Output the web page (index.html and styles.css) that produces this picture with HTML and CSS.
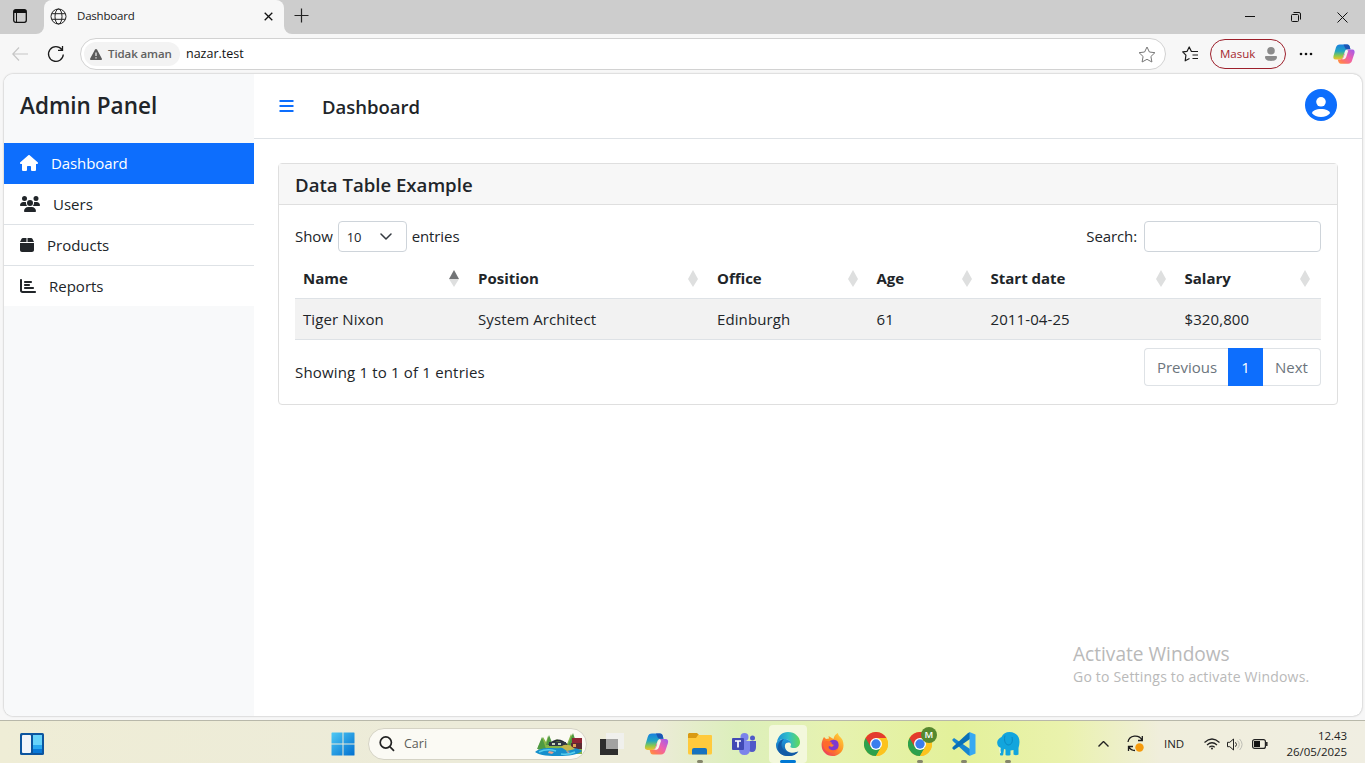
FILE: index.html
```html
<!DOCTYPE html>
<html lang="id">
<head>
<meta charset="utf-8">
<title>Dashboard</title>
<link rel="stylesheet" href="styles.css">
</head>
<body>
<svg class="defs" width="0" height="0" aria-hidden="true">
  <defs>
    <linearGradient id="cpA" x1="0" y1="0" x2="0" y2="1"><stop offset="0" stop-color="#1a7fe0"/><stop offset=".45" stop-color="#22a6c0"/><stop offset=".75" stop-color="#8fc94a"/><stop offset="1" stop-color="#f4c02c"/></linearGradient>
    <linearGradient id="cpB" x1="1" y1="0" x2="0" y2="1"><stop offset="0" stop-color="#9a5cf0"/><stop offset=".45" stop-color="#ee5fae"/><stop offset=".8" stop-color="#ff7a58"/><stop offset="1" stop-color="#ffa03c"/></linearGradient>
    <linearGradient id="win" x1="0" y1="0" x2="1" y2="1"><stop offset="0" stop-color="#4fc9f4"/><stop offset="1" stop-color="#006fd0"/></linearGradient>
    <linearGradient id="edgeTop" x1="0" y1="0" x2="1" y2="0"><stop offset="0" stop-color="#1b8fd6"/><stop offset=".5" stop-color="#30bfc9"/><stop offset="1" stop-color="#62d957"/></linearGradient>
    <linearGradient id="edgeLow" x1="0" y1="0" x2="0" y2="1"><stop offset="0" stop-color="#1f9de0"/><stop offset="1" stop-color="#0f4d9c"/></linearGradient>
    <linearGradient id="fox" x1="1" y1="0" x2="0" y2="1"><stop offset="0" stop-color="#ffe040"/><stop offset=".5" stop-color="#ff8a24"/><stop offset="1" stop-color="#e8246c"/></linearGradient>
    <symbol id="copilot" viewBox="0 0 24 24">
      <path fill="url(#cpA)" d="M7.500 1.500h8c1.500 0 2.300.8 2.700 2.200l.8 3h-2.500c-2 0-3 .8-3.600 2.600l-1.800 5.700c-.6 2-1.600 3-3.600 3H3C.5 18 0 16 .600 13.800L3.200 4.900C3.900 2.600 5.200 1.500 7.500 1.500z"/>
      <path fill="#1c55b4" d="M11.500 1.500h4c1.500 0 2.300.8 2.700 2.200l.8 3h-3.200c-1.700 0-2.600-.6-3-2.200z"/>
      <path fill="url(#cpB)" d="M16.500 22.500h-8c-1.500 0-2.300-.8-2.700-2.200L5.200 18h2.300c2 0 3-1 3.600-3l1.200-3.800 1.500 3.200 2.200-7.400H21c2.500 0 3 2 2.400 4.200l-2.600 7.900c-.7 2.300-2 3.400-4.300 3.400z"/>
      <path fill="#f6f5ec" d="M14.300 8.300h2.400l-2.400 7.200q-.6 1.800-2.300 2.200H9.500q1.500-.6 2-2.200z"/>
    </symbol>
    <symbol id="chrome" viewBox="0 0 24 24">
      <circle cx="12" cy="12" r="12" fill="#fcc31e"/>
      <path fill="#2da14c" d="M1.600 6A12 12 0 0 0 12 24l5.200-9z"/>
      <path fill="#e33b2e" d="M12 6h10.400A12 12 0 0 0 1.600 6l5.200 9z"/>
      <path fill="#fcc31e" d="M12 6h10.400A12 12 0 0 1 12 24l5.200-9z"/>
      <circle cx="12" cy="12" r="6" fill="#fff"/><circle cx="12" cy="12" r="4.700" fill="#3b7ded"/>
    </symbol>
  </defs>
</svg>

<div class="browser">
  <header class="tabstrip">
    <div class="tab-actions"><svg width="14" height="14" viewBox="0 0 14 14"><rect x=".7" y=".7" width="12.600" height="12.600" rx="2" fill="none" stroke="#111" stroke-width="1.300"/><path d="M1 1h12v3H1z" fill="#111"/><path d="M3.500 4v9" stroke="#111"/></svg></div>
    <div class="tab">
      <svg class="globe" width="17" height="17" viewBox="0 0 17 17" fill="none" stroke="#222"><circle cx="8.500" cy="8.500" r="7.500"/><ellipse cx="8.500" cy="8.500" rx="3.500" ry="7.500"/><path d="M1.700 5.700h13.600M1.700 11.300h13.600"/></svg>
      <span class="tab-title">Dashboard</span>
      <svg width="9" height="9" viewBox="0 0 9 9" stroke="#111" stroke-width="1.300"><path d="m.7.700 7.600 7.600M8.300.700.700 8.300"/></svg>
    </div>
    <svg class="new-tab" width="15" height="15" viewBox="0 0 15 15" stroke="#222" stroke-width="1.200"><path d="M7.500.500v14M.500 7.500h14"/></svg>
    <div class="window-buttons">
      <svg width="10" height="10" viewBox="0 0 10 10" stroke="#111"><path d="M0 4.500h10"/></svg>
      <svg width="10" height="10" viewBox="0 0 10 10" fill="none" stroke="#111"><rect x=".5" y="2.500" width="7" height="7" rx="1"/><path d="M2.500.500h5.500a1.500 1.500 0 0 1 1.500 1.500v5.500"/></svg>
      <svg width="11" height="11" viewBox="0 0 11 11" stroke="#111"><path d="m.500.500 10 10M10.500.500l-10 10"/></svg>
    </div>
  </header>

  <div class="toolbar">
    <svg class="back" width="16" height="14" viewBox="0 0 16 14" fill="none" stroke="#c6c6c6" stroke-width="1.200"><path d="M7 .500.800 7 7 13.500M1 7h15"/></svg>
    <svg class="reload" width="18" height="18" viewBox="0 0 18 18" fill="none" stroke="#1b1b1b" stroke-width="1.300"><path d="M16.300 9.500A7.400 7.400 0 1 1 14.800 4.500M15.500 1v4.400H11"/></svg>
    <div class="address">
      <span class="security"><svg width="12" height="11" viewBox="0 0 12 11"><path d="M6 0c.5 0 .8.200 1 .600l4.800 8.800c.4.800 0 1.600-.9 1.600H1.100C.200 11-.200 10.200.200 9.400L5 .600C5.200.200 5.500 0 6 0z" fill="#5b5b5b"/><path d="M6 3.500v3.500M6 8.200v1.300" stroke="#f3f3f3" stroke-width="1.200"/></svg><span>Tidak aman</span></span>
      <span class="url">nazar.test</span>
      <svg class="star" width="18" height="17" viewBox="0 0 18 17" fill="none" stroke="#777" stroke-linejoin="round"><path d="m9 1 2.400 5 5.500.700-4 3.800 1 5.500L9 13.300 4.100 16l1-5.500-4-3.800L6.600 6z"/></svg>
    </div>
    <svg class="favorites" width="17" height="16" viewBox="0 0 17 16" fill="none" stroke="#1b1b1b" stroke-width="1.200" stroke-linejoin="round"><path d="M10.500 5.500 9.300 5.300 7.200 1 5.100 5.300.700 5.900l3.200 3.300-.7 5.600L7.500 12.500M9.800 5.500H16M10.500 9H16M10.500 12.500H16"/></svg>
    <div class="signin"><span>Masuk</span><svg width="12" height="14" viewBox="0 0 12 14" fill="#8b8b8b"><circle cx="6" cy="3.800" r="3.800"/><path d="M1.200 9h9.600c.7 0 1.200.500 1.200 1.100C12 12.800 9.500 14 6 14s-6-1.200-6-3.900C0 9.500.500 9 1.200 9z"/></svg></div>
    <svg class="more" width="14" height="4" viewBox="0 0 14 4" fill="#111"><circle cx="2" cy="2" r="1.300"/><circle cx="7" cy="2" r="1.300"/><circle cx="12" cy="2" r="1.300"/></svg>
    <svg class="copilot" width="22" height="22"><use href="#copilot"/></svg>
  </div>

  <div class="viewport">
    <aside class="sidebar">
      <h4 class="brand">Admin Panel</h4>
      <nav class="menu">
        <a class="menu-item active"><svg width="18" height="16" viewBox="0 0 576 512"><path d="M575.800 255.500c0 18-15 32.100-32 32.100h-32l.7 160.200c0 2.700-.2 5.400-.5 8.100V472c0 22.100-17.900 40-40 40H392c-22.100 0-40-17.900-40-40V384c0-17.700-14.300-32-32-32H256c-17.700 0-32 14.300-32 32v88c0 22.100-17.900 40-40 40H104c-22.100 0-40-17.900-40-40V287.600H32c-18 0-32-14-32-32.100c0-9 3-17 10-24L266.400 8c7-7 15-8 22-8s15 2 21 7L564.800 231.500c8 7 12 15 11 24z"/></svg><span>Dashboard</span></a>
        <a class="menu-item"><svg width="20" height="16" viewBox="0 0 640 512"><path d="M144 0a80 80 0 1 1 0 160A80 80 0 1 1 144 0zM512 0a80 80 0 1 1 0 160A80 80 0 1 1 512 0zM0 298.700C0 239.800 47.800 192 106.700 192h42.700c15.900 0 31 3.500 44.600 9.700c-1.300 7.200-1.900 14.700-1.900 22.300c0 38.200 16.800 72.500 43.300 96H21.300C9.600 320 0 310.400 0 298.700zM405.300 320c26-23.500 42.600-57.800 42.600-96c0-7.600-.7-15-1.900-22.300c13.600-6.300 28.700-9.700 44.600-9.700h42.700C592.200 192 640 239.800 640 298.700c0 11.800-9.600 21.300-21.300 21.300H405.300zM224 224a96 96 0 1 1 192 0 96 96 0 1 1 -192 0zM128 485.300C128 411.700 187.700 352 261.300 352H378.700C452.300 352 512 411.700 512 485.300c0 14.700-11.900 26.700-26.700 26.700H154.700c-14.700 0-26.700-11.900-26.700-26.700z"/></svg><span>Users</span></a>
        <a class="menu-item"><svg width="14" height="16" viewBox="0 0 448 512"><path d="M50.700 58.500L0 160H208V32H93.700C75.500 32 58.900 42.300 50.700 58.500zM240 160H448L397.300 58.500C389.100 42.300 372.500 32 354.300 32H240V160zm208 32H0V416c0 35.300 28.700 64 64 64H384c35.300 0 64-28.700 64-64V192z"/></svg><span>Products</span></a>
        <a class="menu-item"><svg width="16" height="16" viewBox="0 0 512 512"><path d="M32 32c17.700 0 32 14.300 32 32V400c0 8.800 7.200 16 16 16H480c17.700 0 32 14.300 32 32s-14.300 32-32 32H80c-44.200 0-80-35.800-80-80V64C0 46.300 14.300 32 32 32zm96 96c0-17.700 14.300-32 32-32l192 0c17.700 0 32 14.300 32 32s-14.300 32-32 32l-192 0c-17.700 0-32-14.300-32-32zm32 64H288c17.700 0 32 14.300 32 32s-14.300 32-32 32H160c-17.700 0-32-14.300-32-32s14.300-32 32-32zm0 96H416c17.700 0 32 14.300 32 32s-14.300 32-32 32H160c-17.700 0-32-14.300-32-32s14.300-32 32-32z"/></svg><span>Reports</span></a>
      </nav>
    </aside>
    <main class="page">
      <div class="topbar">
        <svg class="bars" width="15" height="12" viewBox="0 0 15 12" stroke="#0d6efd" stroke-width="2"><path d="M.500 1h14M.500 6h14M.500 11h14"/></svg>
        <h5 class="page-title">Dashboard</h5>
        <svg class="avatar" width="32" height="32" viewBox="0 0 32 32"><circle cx="16" cy="16" r="16" fill="#0d6efd"/><circle cx="16" cy="12.800" r="4.800" fill="#fff"/><path d="M16 20c5 0 9 2 9 4.200-1.800 2-5 3.800-9 3.800s-7.200-1.800-9-3.800C7 22 11 20 16 20z" fill="#fff"/></svg>
      </div>
      <section class="card">
        <h5 class="card-header">Data Table Example</h5>
        <div class="card-body">
          <div class="controls">
            <label class="length"><span>Show</span><span class="select">10<svg width="12" height="7" viewBox="0 0 12 7" fill="none" stroke="#343a40" stroke-width="1.500" stroke-linecap="round" stroke-linejoin="round"><path d="m1 1 5 5 5-5"/></svg></span><span>entries</span></label>
            <label class="search"><span>Search:</span><input type="text"></label>
          </div>
          <table class="data">
            <colgroup><col class="c1"><col class="c2"><col class="c3"><col class="c4"><col class="c5"><col class="c6"></colgroup>
            <thead><tr>
              <th><div class="th asc">Name<i></i></div></th><th><div class="th">Position<i></i></div></th><th><div class="th">Office<i></i></div></th><th><div class="th">Age<i></i></div></th><th><div class="th">Start date<i></i></div></th><th><div class="th">Salary<i></i></div></th>
            </tr></thead>
            <tbody><tr><td>Tiger Nixon</td><td>System Architect</td><td>Edinburgh</td><td>61</td><td>2011-04-25</td><td>$320,800</td></tr></tbody>
          </table>
          <div class="table-footer">
            <span class="info">Showing 1 to 1 of 1 entries</span>
            <div class="pagination"><span class="prev">Previous</span><span class="current">1</span><span class="next">Next</span></div>
          </div>
        </div>
      </section>
    </main>
  </div>
</div>

<div class="watermark"><div class="wm-title">Activate Windows</div><div class="wm-text">Go to Settings to activate Windows.</div></div>

<footer class="taskbar">
  <svg class="widgets" width="24" height="22" viewBox="0 0 24 22"><rect width="24" height="22" rx="1.500" fill="#0c559f"/><rect x="2" y="2" width="9" height="18" rx="1" fill="#f2f5fa"/><path d="M13 2h9v10h-9z" fill="#67d3fa"/><path d="M13 12h9v4h-9z" fill="#28a8f0"/><path d="M13 16h9v4h-9z" fill="#0878d8"/></svg>
  <svg class="start" width="24" height="24" viewBox="0 0 24 24" fill="url(#win)"><path d="M1 .500H11.500v11H.500V1zM12.500.500H23a.5.500 0 0 1 .500.500v10.500h-11zM.500 12.500h11v11H1a.5.500 0 0 1-.5-.5zM12.500 12.500h11V23a.5.500 0 0 1-.5.500H12.500z"/></svg>
  <div class="task-search">
    <svg width="16" height="16" viewBox="0 0 16 16" fill="none" stroke="#222" stroke-width="1.700"><circle cx="6.800" cy="6.500" r="5.600"/><path d="m10.800 10.700 4.200 4.200"/></svg>
    <span>Cari</span>
    <svg class="scene" width="48" height="25" viewBox="0 0 48 25"><path d="M3 15 8 5l3 5 2-6 4 8 5-5 4 4 6 1 4-10 4 8 4-1 3 4v9H4z" fill="#86b548"/><path d="m2 17 5-12 4 12zM11 13l3-10 4 10zM33 13l5-12 4 12z" fill="#4f9a41"/><path d="M14 13q9-9 18 0" fill="none" stroke="#252a35" stroke-width="2"/><path d="M14 10h17v4H14z" fill="#303744"/><path d="M17 11h3v2h-3zM23 11h3v2h-3z" fill="#c7d7bd"/><path d="M37 6h10v5H37z" fill="#8e2434"/><path d="M36 11h11v6H36z" fill="#5d2b34"/><path d="M38 12h3v3h-3z" fill="#e3a352"/><path d="M0 20c8-6 18-3 25-4 9-1 20 0 22 3-4 4-14 5-23 5S5 24 0 20z" fill="#168fcc"/><path d="M4 20q8-4 17-1M26 22q9 1 14-2" fill="none" stroke="#57cdec" stroke-width="1.500"/><path d="M26 15q3-4 10-1l4 3-8 2z" fill="#c4b74c"/><path d="m14 19 5 1-2 2-4-1zM31 19l4 1-2 1z" fill="#e9a18c"/></svg>
  </div>
  <div class="apps">
    <div class="app"><svg width="24" height="22" viewBox="0 0 24 22"><path d="M0 6h18v16H0z" fill="#2d2d2d"/><path d="M6 0h18v16H6z" fill="#f0f0ee" fill-opacity=".94"/><path d="M6 6h12v10H6z" fill="#a2a2a1"/></svg></div>
    <div class="app"><svg width="25" height="24"><use href="#copilot"/></svg></div>
    <div class="app running"><svg width="24" height="22" viewBox="0 0 24 22"><path d="M1 0h8l2 2v4H0V1z" fill="#d99a13"/><path d="M10 2h13a1 1 0 0 1 1 1v17a1.500 1.500 0 0 1-1.500 1.500h-21A1.500 1.500 0 0 1 0 20V5h8z" fill="#ffca3d"/><path d="M4 21.500V17q0-2 2-2h11q2 0 2 2v4.500z" fill="#1773bf"/></svg></div>
    <div class="app"><svg width="25" height="22" viewBox="0 0 25 22"><circle cx="12.500" cy="4" r="4" fill="#7b83eb"/><circle cx="20.500" cy="5" r="2.500" fill="#5059c9"/><path d="M16 8h8v6q0 5-4 5-4 0-4-4z" fill="#5059c9"/><path d="M7 8h11v8q0 6-5.500 6T7 16z" fill="#7b83eb"/><rect y="5" width="12" height="12" rx="1" fill="#4149b5"/><path d="M3 8h6M6 8v6.500" stroke="#fff" stroke-width="1.700"/></svg></div>
    <div class="app selected"><svg width="24" height="24" viewBox="0 0 24 24"><path d="M1 10C2 4 6 0 12 0c7 0 12 5 12 10 0 4-3 6-6 6-4 0-4-1-3-3 0-4-3-6-7-6-3 0-5 1-7 3z" fill="url(#edgeTop)"/><path d="M0 13C0 9 4 7 8 7c4 0 7 2 7 5-1-2-5-2-6 1-1 5 4 8 8 8 2 0 4-.6 5.500-1.500C20 22.500 17 24 12 24 5 24 0 19 0 13z" fill="url(#edgeLow)"/><path d="M8 7c-3 3-4 8 1 12 4 3 9 2 13 .500C20 22.500 17 24 12 24 5 24 2 20 2 15c0-4 2-7 6-8z" fill="#125ba6"/></svg></div>
    <div class="app"><svg width="23" height="23" viewBox="0 0 23 23"><path d="M3 4 5 6l3-.5L7.500 3l5 3C13 3 14.500 1 17 0c0 3 3 4 4.500 7C25 16 19 23 11.500 23 3 23-3 14 3 4z" fill="url(#fox)"/><path d="M8 10c1-4 7-4 9-1 2 5-1 9-5 9-5 0-6-4-4-5l3 1 2-2z" fill="#7d38cf"/><path d="M2 10c3-3 7-2 9 0-1 2-3.500 2-3.500 4 0 3 6 5 9.500 1-2 7-15 6-15-5z" fill="#ff6a2c"/></svg></div>
    <div class="app"><svg width="24" height="24"><use href="#chrome"/></svg></div>
    <div class="app running"><svg width="24" height="24"><use href="#chrome"/></svg><span class="badge">M</span></div>
    <div class="app running"><svg width="24" height="24" viewBox="0 0 24 24"><path d="M2 6 .500 7.400v1.300L16 23l2 .700V17z" fill="#1686d0"/><path d="M2 18 .500 16.600v-1.300L16 1l2-.700V7z" fill="#0870b7"/><path d="m17.500 0 6 2.500v19l-6 2.500z" fill="#36a9f2"/></svg></div>
    <div class="app running"><svg width="23" height="24" viewBox="0 0 23 24"><path d="M4.500 5C6 1.500 9 0 12.500 0 18.500 0 22.500 4 22.500 10c0 2-.5 4-1 6v6.500q-2.500 1.500-5 0V18l-3 .5V23q-2.500 1.200-5 0v-5.500L7 17l-.8 6q-1.700 1-3.200 0l.5-7C1 15 0 12.500.200 10 .500 8 2 6 4.500 5z" fill="#12a5dd"/><path d="M8 3.500c-1 4-.5 8.500 3 9.500 4 0 5-4 4-8" fill="none" stroke="#0b88c2"/><path d="M3 15.500q-.8 3 .5 5.500" fill="none" stroke="#e9f7e0" stroke-width="1.200"/></svg></div>
  </div>
  <div class="tray">
    <svg class="chevron" width="11" height="6" viewBox="0 0 11 6" fill="none" stroke="#222" stroke-width="1.400"><path d="m.500 5.500 5-5 5 5"/></svg>
    <svg class="update" width="18" height="18" viewBox="0 0 18 18" fill="none" stroke="#1d1d1d" stroke-width="1.300"><path d="M1 7c1-7 11-8 14-2M15.300 1v4.500H11M8 15.500C5 15.500 3 14 2 12M1.500 16v-4.500H6"/><circle cx="12.500" cy="12.500" r="4.200" fill="#f59a0b" stroke="none"/></svg>
    <span class="lang">IND</span>
    <svg class="wifi" width="16" height="12" viewBox="0 0 16 12" fill="none" stroke="#222" stroke-width="1.200"><path d="M.500 4.500Q8-2.500 15.500 4.500M3 7q5-4.500 10 0M5.300 9.300Q8 7 10.700 9.300"/><circle cx="8" cy="10.600" r="1" fill="#222" stroke="none"/></svg>
    <svg class="sound" width="16" height="13" viewBox="0 0 16 13" fill="none" stroke="#222"><path d="M.500 4.300h2.300L6.500 1v11L2.800 8.700H.500zM8.500 4.300q2 2.200 0 4.400"/><path d="M10.500 2.600q3.500 3.900 0 7.800M12.600 1q5 5.500 0 11" stroke="#bdbdb5"/></svg>
    <svg class="battery" width="16" height="10" viewBox="0 0 16 10"><rect x=".6" y=".6" width="12.800" height="8.800" rx="2" fill="none" stroke="#222" stroke-width="1.200"/><path d="M2 2h6v6H2z" fill="#111"/><path d="M14.800 3v4" stroke="#222" stroke-width="1.500"/></svg>
    <div class="clock"><div class="time">12.43</div><div class="date">26/05/2025</div></div>
  </div>
</footer>
</body>
</html>
```
FILE: styles.css
```css
* { box-sizing: border-box; }
html, body { height: 100%; overflow: hidden; }
body { margin: 0; display: flex; flex-direction: column; color: #212529; background: #f7f7f7; font-family: "Open Sans", "Noto Sans", sans-serif; font-size: 15px; line-height: 24px; white-space: nowrap; }
h4, h5 { margin: 0; font-weight: 600; }
svg { display: block; flex: none; }
.defs { position: absolute; }

.browser { height: 720px; flex: none; display: flex; flex-direction: column; }
.tabstrip { height: 34px; display: flex; align-items: center; background: linear-gradient(90deg, #cdcdcd 0 36px, #f7f7f7 36px 292px, #cdcdcd 292px); }
.tab-actions { width: 44px; height: 34px; padding: 9px 0 0 13px; background: #cdcdcd; border-bottom-right-radius: 8px; }
.tab { position: relative; width: 240px; height: 34px; display: flex; align-items: center; padding: 0 11px 2px 6px; background: #f7f7f7; border-radius: 8px 8px 0 0; box-shadow: 0 -8px 0 #cdcdcd; }
.tab::before { content: ""; position: absolute; inset: 0 -8px 8px; z-index: -1; background: #cdcdcd; }
.tab::after { content: ""; position: absolute; left: 240px; top: 0; width: 8px; height: 34px; background: #cdcdcd; border-bottom-left-radius: 8px; }
.tabstrip { isolation: isolate; }
.tab-title { flex: 1; margin-left: 10px; font-size: 11.5px; letter-spacing: -.2px; color: #1b1b1b; }
.new-tab { margin: -3px 0 0 10px; }
.window-buttons { margin-left: auto; display: flex; align-items: center; gap: 36px; padding-right: 17px; }

.toolbar { height: 40px; display: flex; align-items: center; padding: 0 10px 0 12px; }
.reload { margin-left: 19px; }
.address { width: 1086px; height: 32px; margin-left: 15px; display: flex; align-items: center; padding: 0 9px 0 3px; background: #fff; border: 1px solid #d2d2d2; border-radius: 16px; }
.security { width: 96px; height: 24px; display: flex; align-items: center; gap: 6px; padding-left: 6px; background: #f3f3f3; border-radius: 12px; color: #606060; font-size: 11.5px; font-weight: 600; letter-spacing: -.1px; }
.url { flex: 1; padding-left: 6px; font-size: 12.5px; color: #111; }
.favorites { margin-left: 16px; }
.signin { width: 76px; height: 30px; margin-left: 11px; display: flex; align-items: center; justify-content: space-between; padding: 0 8px 0 9px; border: 1px solid #9d1f2b; border-radius: 15px; color: #a4262c; font-size: 11.5px; }
.more { margin-left: 13px; }
.copilot { margin-left: 20px; }

.viewport { height: 642px; margin: 0 3px 0 4px; display: flex; background: #fff; border-radius: 9px; overflow: hidden; box-shadow: 0 0 2px rgba(0,0,0,.35); }
.sidebar { width: 250px; background: #f8f9fa; }
.brand { height: 69px; padding: 17px 16px 0; font-size: 22.5px; line-height: 29px; }
.menu-item { height: 41px; display: flex; align-items: center; gap: 13px; padding: 0 16px; background: #fff; border-bottom: 1px solid #dee2e6; }
.menu-item:last-child { height: 40px; border-bottom: 0; }
.menu-item svg { fill: currentColor; }
.menu-item.active { background: #0d6efd; border-color: #0d6efd; color: #fff; letter-spacing: -.1px; }

.page { flex: 1; }
.topbar { height: 65px; display: flex; align-items: center; padding: 0 25px 2px 25px; border-bottom: 1px solid #dee2e6; }
.page-title { flex: 1; margin-left: 28px; padding-top: 4px; font-size: 18.5px; }
.bars { margin-top: 1px; }
.card { height: 242px; margin: 24px 24px 0; border: 1px solid #dfdfdf; border-radius: 4px; }
.card-header { height: 41px; padding: 1px 16px 0; display: flex; align-items: center; background: #f7f7f7; border-bottom: 1px solid #dfdfdf; font-size: 18.6px; }
.card-body { padding: 16px 16px 0; }
.controls { display: flex; justify-content: space-between; height: 31px; }
.length, .search { display: flex; align-items: center; height: 31px; letter-spacing: -.1px; }
.length > span:not(.select), .search > span { margin-top: -1px; }
.length { gap: 5px; }
.search { gap: 7px; }
.select { width: 69px; height: 31px; padding: 0 14px 0 8px; display: flex; align-items: center; justify-content: space-between; border: 1px solid #ced4da; border-radius: 4px; font-size: 13px; }
.search input { width: 177px; height: 31px; border: 1px solid #ced4da; border-radius: 4px; background: #fff; }

.data { width: 1026px; margin-top: 6px; table-layout: fixed; border-collapse: separate; border-spacing: 0; text-align: left; }
.c1 { width: 175px; } .c2 { width: 239px; } .c3 { width: 159.5px; } .c4 { width: 114px; } .c5 { width: 194px; } .c6 { width: 144.5px; }
.data th, .data td { height: 41px; padding: 0 8px; border-bottom: 1px solid #dee2e6; }
.data td { background: #f2f2f2; letter-spacing: .1px; }
.th { display: flex; justify-content: space-between; align-items: center; padding-right: 3px; }
.th i { display: flex; flex-direction: column; }
.th i::before, .th i::after { content: ""; width: 0; height: 0; border: 5px solid transparent; }
.th i::before { border-top: 0; border-bottom: 9px solid #dedfdf; }
.th i::after { border-bottom: 0; border-top: 8px solid #dedfdf; }
.th.asc i::before { border-bottom-color: #727476; }
.table-footer { display: flex; justify-content: space-between; padding-top: 8px; }
.info { padding-top: 12px; letter-spacing: .17px; }
.pagination { display: flex; height: 38px; color: #6c757d; }
.pagination span { display: flex; align-items: center; justify-content: center; border: 1px solid #dee2e6; }
.pagination .prev { width: 85px; border-radius: 4px 0 0 4px; border-right: 0; }
.pagination .current { width: 35px; color: #fff; background: #0d6efd; border-color: #0d6efd; margin-left: -1px; }
.pagination .next { width: 58px; border-radius: 0 4px 4px 0; border-left: 0; }

.watermark { position: absolute; left: 1073px; top: 641px; color: #b9b9b9; }
.wm-title { font-size: 19.1px; line-height: 26px; }
.wm-text { font-size: 14px; line-height: 20px; letter-spacing: .2px; }

.taskbar { height: 43px; flex: none; display: flex; align-items: center; padding: 4px 18px 0 20px; border-top: 1px solid #b8b8aa; background: linear-gradient(90deg, #efedd6 0, #ecebd9 34%, #ecebd8 48%, #dcefbb 54%, #e6f2b0 61%, #e3f19a 70%, #eaf2ad 78%, #f0eedc 85%, #f0eee2 100%); }
.start { margin-left: 287px; }
.task-search { width: 219px; height: 32px; margin-left: 13px; display: flex; align-items: center; padding: 0 3px 0 10px; background: #fbfaf4; border: 1px solid #d5d3c5; border-radius: 16px; font-size: 12.5px; color: #5d5d59; }
.task-search span { flex: 1; margin-left: 9px; }
.apps { display: flex; margin-left: 3px; }
.app { position: relative; width: 44px; height: 38px; display: flex; align-items: center; justify-content: center; }
.app::after { position: absolute; bottom: 0; height: 3px; border-radius: 2px; }
.running::after { content: ""; width: 6px; background: #85866c; }
.selected::before { content: ""; position: absolute; inset: 0 3px; background: #f3f8dc; border-radius: 4px; }
.selected svg { position: relative; }
.selected::after { content: ""; width: 16px; background: #0078d4; }
.badge { position: absolute; left: 23px; top: 2px; width: 16px; height: 16px; border-radius: 50%; background: #56882f; color: #fff; font-size: 9.5px; font-weight: 600; line-height: 16px; text-align: center; }
.tray { flex: 1; display: flex; align-items: center; margin-left: 68px; }
.update { margin-left: 18px; }
.lang { width: 21px; margin-left: 19px; font-size: 11.5px; color: #222; }
.wifi { margin-left: 19px; }
.sound { margin-left: 7px; }
.battery { margin-left: 9px; }
.clock { margin-left: auto; text-align: right; font-size: 11.5px; line-height: 16px; color: #222; letter-spacing: -.05px; }
```
